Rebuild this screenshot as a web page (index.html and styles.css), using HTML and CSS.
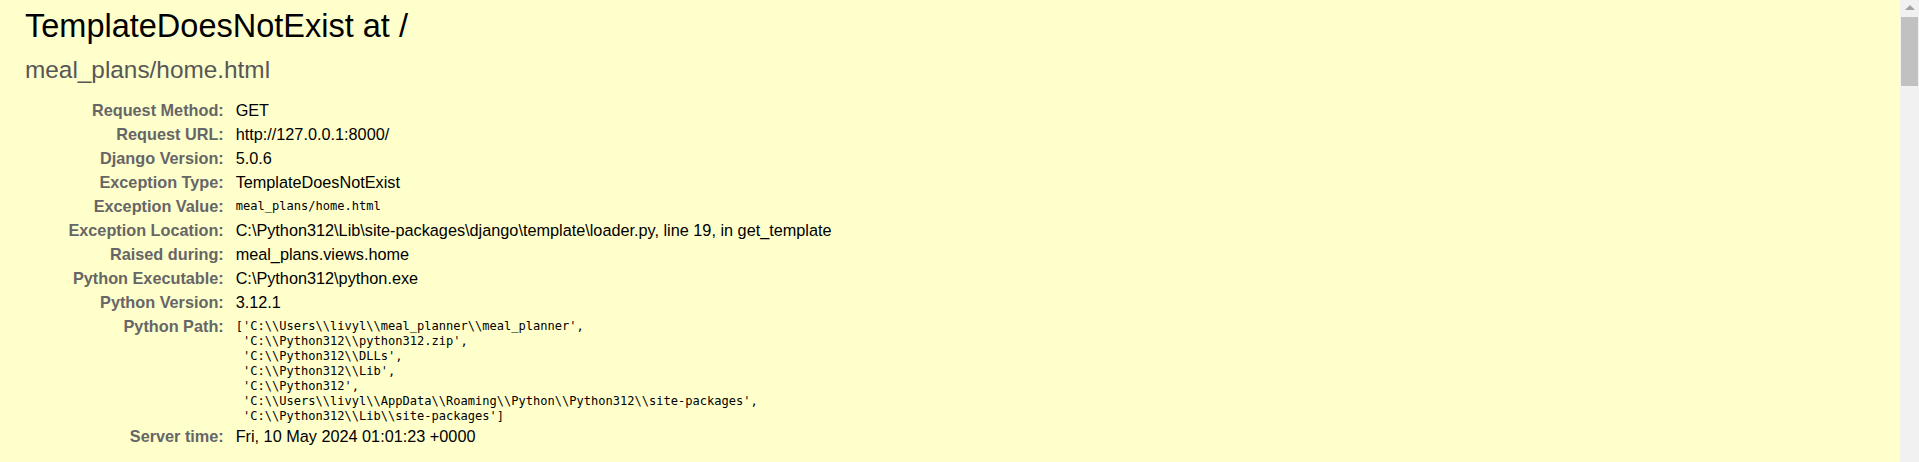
FILE: index.html
```
<!DOCTYPE html>
<html lang="en">
<head>
<meta charset="utf-8">
<title>TemplateDoesNotExist at /</title>
<link rel="stylesheet" href="styles.css">
</head>
<body>
<div class="viewport">
  <div class="page">
    <header class="summary">
      <h1 class="title">TemplateDoesNotExist at /</h1>
      <pre class="exception-value">meal_plans/home.html</pre>
      <table class="meta">
        <tbody>
          <tr><th scope="row">Request Method:</th><td>GET</td></tr>
          <tr><th scope="row">Request URL:</th><td>http://127.0.0.1:8000/</td></tr>
          <tr><th scope="row">Django Version:</th><td>5.0.6</td></tr>
          <tr><th scope="row">Exception Type:</th><td>TemplateDoesNotExist</td></tr>
          <tr><th scope="row">Exception Value:</th><td><pre class="code">meal_plans/home.html</pre></td></tr>
          <tr><th scope="row">Exception Location:</th><td>C:\Python312\Lib\site-packages\django\template\loader.py, line 19, in get_template</td></tr>
          <tr><th scope="row">Raised during:</th><td>meal_plans.views.home</td></tr>
          <tr><th scope="row">Python Executable:</th><td>C:\Python312\python.exe</td></tr>
          <tr><th scope="row">Python Version:</th><td>3.12.1</td></tr>
          <tr><th scope="row">Python Path:</th><td><pre class="code">['C:\\Users\\livyl\\meal_planner\\meal_planner',
 'C:\\Python312\\python312.zip',
 'C:\\Python312\\DLLs',
 'C:\\Python312\\Lib',
 'C:\\Python312',
 'C:\\Users\\livyl\\AppData\\Roaming\\Python\\Python312\\site-packages',
 'C:\\Python312\\Lib\\site-packages']</pre></td></tr>
          <tr><th scope="row">Server time:</th><td>Fri, 10 May 2024 01:01:23 +0000</td></tr>
        </tbody>
      </table>
    </header>
  </div>
  <div class="scrollbar">
    <div class="scroll-arrow"></div>
    <div class="scroll-thumb"></div>
  </div>
</div>
</body>
</html>
```
FILE: styles.css
```
html, body {
  margin: 0;
  padding: 0;
  overflow: hidden;
  background: #ffffff;
}
body {
  font-family: "Liberation Sans", Arial, sans-serif;
  color: #000;
}
.viewport {
  display: flex;
  height: 462px;
  overflow: hidden;
}
.page {
  flex: 1;
  min-width: 0;
  background: #fff;
}
.summary {
  background: #ffffcc;
  padding: 8px 25px 14px 25px;
  border-bottom: 1px solid #dddddd;
}
.title {
  margin: 0;
  font-size: 32.5px;
  font-weight: normal;
  line-height: 37.3px;
}
.exception-value {
  margin: 11px 0 14px 0;
  font-family: "Liberation Sans", Arial, sans-serif;
  font-size: 24.375px;
  line-height: 28px;
  color: #575757;
  white-space: pre-wrap;
}
.meta {
  border: none;
  border-collapse: collapse;
  background: transparent;
  font-size: 16.25px;
}
.meta th,
.meta td {
  vertical-align: top;
  line-height: 19.07px;
}
.meta th {
  width: 195px;
  text-align: right;
  color: #666666;
  font-weight: bold;
  padding: 2.5px 8.125px 2.5px 3.75px;
}
.meta td {
  padding: 2.5px 3.75px;
}
.code {
  margin: 0 0 -2px 0;
  padding-top: 2px;
  font-family: "DejaVu Sans Mono", "Liberation Mono", monospace;
  font-size: 12.05px;
  line-height: 15px;
  white-space: pre-wrap;
  color: #000;
}
.scrollbar {
  width: 19px;
  flex: none;
  background: #f1f1f1;
  display: flex;
  flex-direction: column;
  align-items: center;
}
.scroll-arrow {
  margin-top: 5px;
  width: 0;
  height: 0;
  border-left: 5px solid transparent;
  border-right: 5px solid transparent;
  border-bottom: 5px solid #a3a3a3;
}
.scroll-thumb {
  margin-top: 7px;
  width: 17px;
  height: 69px;
  background: #c1c1c1;
}
```
